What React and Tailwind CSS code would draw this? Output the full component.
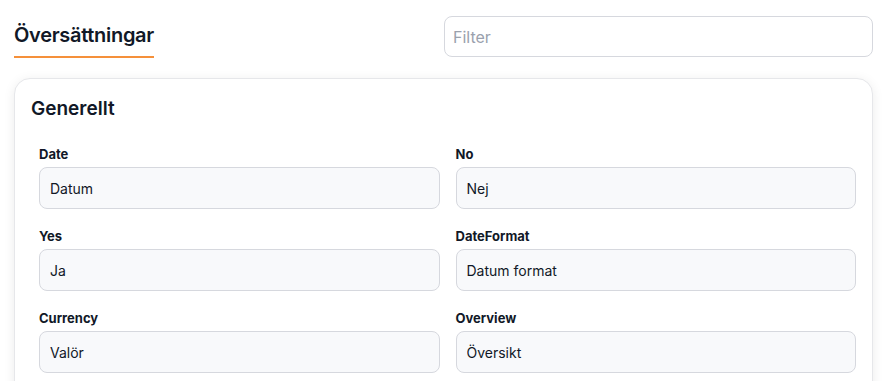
import React from 'react';

const FIELDS = [
  { key: 'Date', value: 'Datum' },
  { key: 'No', value: 'Nej' },
  { key: 'Yes', value: 'Ja' },
  { key: 'DateFormat', value: 'Datum format' },
  { key: 'Currency', value: 'Valör' },
  { key: 'Overview', value: 'Översikt' },
];

function Field({ label, value }) {
  return (
    <div className="flex flex-col">
      <label className="text-[13px] leading-[18px] font-bold text-[#111827] mb-1">{label}</label>
      <input
        readOnly
        value={value}
        className="h-[42px] w-full rounded-lg border border-[#d6d8de] bg-[#f8f9fb] px-[10px] text-[14px] text-[#111827] outline-none"
      />
    </div>
  );
}

export default function App() {
  return (
    <div className="h-[390px] bg-white text-[#111827] overflow-hidden" style={{ fontFamily: 'Inter, "Noto Sans", sans-serif' }}>
      <div className="h-[381px] overflow-hidden">
        <div className="flex items-start justify-between pl-[14px] pr-[9px] pt-4">
          <div className="pt-[5px]">
            <h1 className="text-[20px] leading-[28px] font-semibold tracking-[-0.3px]">Översättningar</h1>
            <div className="mt-[7px] h-[2px] bg-[#f5903a]" />
          </div>
          <input
            placeholder="Filter"
            className="h-[41px] w-[429px] rounded-lg border border-[#d6d8de] bg-white px-2 text-[16px] placeholder:text-[#9aa1ad] outline-none"
          />
        </div>
        <div className="ml-[14px] mr-[9px] mt-5 rounded-2xl border border-[#e6e7ea] bg-white p-4 shadow-[0_2px_12px_rgba(0,0,0,0.08)]">
          <h2 className="text-[19px] leading-[28px] font-semibold">Generellt</h2>
          <div className="ml-2 mt-[22px] grid grid-cols-2 gap-x-4 gap-y-[18px]">
            {FIELDS.map((f) => (
              <Field key={f.key} label={f.key} value={f.value} />
            ))}
          </div>
          <div className="h-10" />
        </div>
      </div>
    </div>
  );
}
